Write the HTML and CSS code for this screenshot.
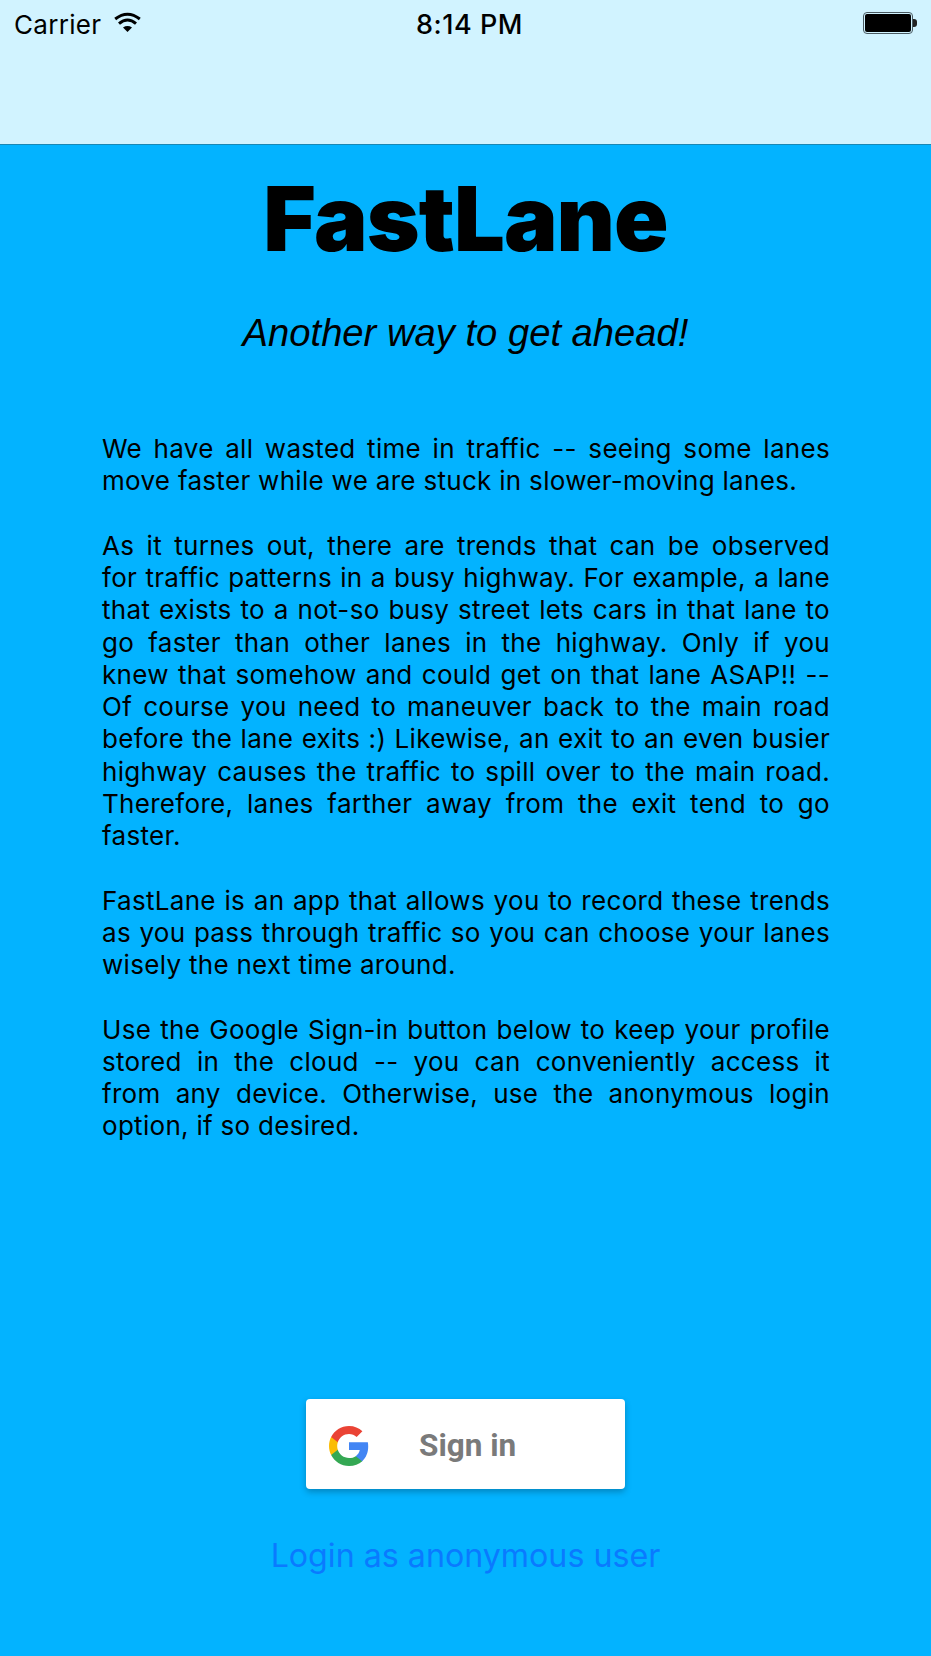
FILE: index.html
```html
<!DOCTYPE html>
<html lang="en">
<head>
  <meta charset="UTF-8">
  <title>FastLane</title>
  <meta name="viewport" content="width=device-width, initial-scale=1.0">
  <link rel="stylesheet" href="styles.css">
</head>
<body>
  <!-- Status bar + empty nav bar -->
  <header class="topbar">
    <div class="status">
      <div class="status-left">
        <span class="carrier">Carrier</span>
        <svg class="wifi" viewBox="0 0 27 20" width="27" height="20">
          <path d="M13.5 20 L9 15.4 Q13.5 12.8 18 15.4 Z" fill="#000"/>
          <path d="M5 11.6 Q13.5 4.4 22 11.6" fill="none" stroke="#000" stroke-width="3"/>
          <path d="M1.2 7 Q13.5 -2.6 25.8 7" fill="none" stroke="#000" stroke-width="3"/>
        </svg>
      </div>
      <span class="time">8:14 PM</span>
      <div class="status-right">
        <div class="battery"><div class="battery-fill"></div></div>
        <div class="battery-tip"></div>
      </div>
    </div>
  </header>

  <main class="content">
    <h1 class="title">FastLane</h1>
    <p class="tagline">Another way to get ahead!</p>

    <div class="intro">
      <p>We have all wasted time in traffic -- seeing some lanes move faster while we are stuck in slower-moving lanes.</p>
      <p>
        <span class="line">As it turnes out, there are trends that can be observed</span>
        <span class="line">for traffic patterns in a busy highway. For example, a lane</span>
        <span class="line">that exists to a not-so busy street lets cars in that lane to</span>
        <span class="line">go faster than other lanes in the highway. Only if you</span>
        <span class="line">knew that somehow and could get on that lane ASAP!! --</span>
        <span class="line">Of course you need to maneuver back to the main road</span>
        <span class="line">before the lane exits :) Likewise, an exit to an even busier</span>
        <span class="line">highway causes the traffic to spill over to the main road.</span>
        <span class="line">Therefore, lanes farther away from the exit tend to go</span>
        faster.
      </p>
      <p>FastLane is an app that allows you to record these trends as you pass through traffic so you can choose your lanes wisely the next time around.</p>
      <p>
        <span class="line">Use the Google Sign-in button below to keep your profile</span>
        <span class="line">stored in the cloud -- you can conveniently access it</span>
        <span class="line">from any device. Otherwise, use the anonymous login</span>
        option, if so desired.
      </p>
    </div>

    <button class="google-btn">
      <svg class="google-logo" viewBox="0 0 18 18" width="40" height="40">
        <path fill="#4285F4" d="M17.64 9.2c0-.637-.057-1.251-.164-1.84H9v3.481h4.844c-.209 1.125-.843 2.078-1.796 2.716v2.258h2.908c1.702-1.567 2.684-3.874 2.684-6.615z"/>
        <path fill="#34A853" d="M9 18c2.43 0 4.467-.806 5.956-2.18l-2.908-2.259c-.806.54-1.837.86-3.048.86-2.344 0-4.328-1.584-5.036-3.711H.957v2.332C2.438 15.983 5.482 18 9 18z"/>
        <path fill="#FBBC05" d="M3.964 10.71c-.18-.54-.282-1.117-.282-1.71s.102-1.17.282-1.71V4.958H.957C.347 6.173 0 7.548 0 9s.348 2.827.957 4.042l3.007-2.332z"/>
        <path fill="#EA4335" d="M9 3.58c1.321 0 2.508.454 3.44 1.345l2.582-2.58C13.463.891 11.426 0 9 0 5.482 0 2.438 2.017.957 4.958L3.964 7.29C4.672 5.163 6.656 3.58 9 3.58z"/>
      </svg>
      <span>Sign in</span>
    </button>
    <a class="anon-link" href="#">Login as anonymous user</a>
  </main>
</body>
</html>
```

FILE: styles.css
```css
/* FastLane welcome screen */
body {
  font-family: Inter, "Liberation Sans", sans-serif;
  background-color: #03b3ff;
  color: #000;
  margin: 0;
  height: 1656px;
  overflow: hidden;
}
.topbar {
  height: 145px;
  box-sizing: border-box;
  background-color: #d1f3ff;
  border-bottom: 1px solid #1b87b3;
}
.status {
  display: grid;
  grid-template-columns: 1fr auto 1fr;
  align-items: center;
  height: 48px;
  padding: 0 14px;
  font-size: 26px;
}
.status-left {
  display: flex;
  align-items: center;
  gap: 13px;
}
.carrier {
  letter-spacing: 0.3px;
}
.wifi {
  margin-top: -4px;
}
.time {
  font-size: 27px;
  font-weight: 500;
  letter-spacing: 0.5px;
  margin-left: 8px;
}
.status-right {
  display: flex;
  align-items: center;
  justify-content: flex-end;
  margin-top: -2px;
}
.battery {
  width: 50px;
  height: 22px;
  box-sizing: border-box;
  border: 1px solid #4a5a62;
  border-radius: 4px;
  padding: 1px;
}
.battery-fill {
  height: 100%;
  background-color: #000;
  border-radius: 2px;
}
.battery-tip {
  width: 4px;
  height: 8px;
  background-color: #222;
  border-radius: 0 3px 3px 0;
}
.content {
  display: flex;
  flex-direction: column;
  align-items: center;
}
.title {
  font-size: 90px;
  font-weight: 900;
  letter-spacing: -1px;
  line-height: 110px;
  margin: 19px 0 0;
}
.tagline {
  font-family: "Liberation Sans", Arial, sans-serif;
  font-size: 38.2px;
  font-style: italic;
  line-height: 44px;
  margin: 37px 0 0;
}
.intro {
  width: 728px;
  margin: 78px 0 0 1px;
  font-size: 26px;
  letter-spacing: 0.3px;
  line-height: 32.25px;
  text-align: justify;
}
.intro p {
  margin: 0 0 32.25px;
}
.line {
  display: block;
  text-align-last: justify;
}
.google-btn {
  display: flex;
  align-items: center;
  gap: 50px;
  width: 319px;
  height: 90px;
  margin-top: 224px;
  padding: 4px 0 0 23px;
  box-sizing: border-box;
  background-color: #fff;
  border: none;
  border-radius: 4px;
  box-shadow: 0 3px 6px rgba(0,0,0,0.25);
  font-family: Roboto, sans-serif;
  font-size: 31.5px;
  font-weight: 700;
  color: #7a7a7a;
}
.anon-link {
  margin-top: 47px;
  font-size: 32.2px;
  line-height: 40px;
  color: #0a7aff;
  text-decoration: none;
}
```
